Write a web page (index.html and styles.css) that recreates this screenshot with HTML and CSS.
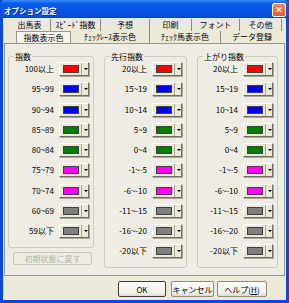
FILE: index.html
```html
<!DOCTYPE html>
<html lang="ja">
<head>
    <meta charset="UTF-8">
    <title>オプション設定</title>
    <link rel="stylesheet" href="styles.css">
</head>
<body>
    <div class="window">
        <div class="titlebar">
            <span class="title">オプション設定</span>
            <span class="close">✕</span>
        </div>
        <div class="frame">
            <div class="client">
                <div class="tab-row row1">
                    <div class="tab w1">出馬表</div>
                    <div class="tab w2">ｽﾋﾟｰﾄﾞ指数</div>
                    <div class="tab w3">予想</div>
                    <div class="tab w4">印刷</div>
                    <div class="tab w5">フォント</div>
                    <div class="tab w6">その他</div>
                </div>
                <div class="tab-row row2">
                    <div class="tab selected w7">指数表示色</div>
                    <div class="tab w8">ﾁｪｯｸﾚｰｽ表示色</div>
                    <div class="tab w9">ﾁｪｯｸ馬表示色</div>
                    <div class="tab w10">データ登録</div>
                </div>
                <div class="panel">
                    <div class="col">
                        <fieldset class="group g1">
                            <legend>指数</legend>
                            <div class="rows" id="shisu"></div>
                        </fieldset>
                        <button class="reset" disabled>初期状態に戻す</button>
                    </div>
                    <fieldset class="group g2">
                        <legend>先行指数</legend>
                        <div class="rows" id="senko"></div>
                    </fieldset>
                    <fieldset class="group g3">
                        <legend>上がり指数</legend>
                        <div class="rows" id="agari"></div>
                    </fieldset>
                </div>
                <div class="footer">
                    <button class="btn default ok">OK</button>
                    <button class="btn cancel">キャンセル</button>
                    <button class="btn help">ヘルプ(<u>H</u>)</button>
                </div>
            </div>
        </div>
    </div>

    <script>
        const shisu = [
            ["100以上", "red"], ["95~99", "blue"], ["90~94", "blue"],
            ["85~89", "green"], ["80~84", "green"], ["75~79", "magenta"],
            ["70~74", "magenta"], ["60~69", "gray"], ["59以下", "gray"]
        ];
        const sub = [
            ["20以上", "red"], ["15~19", "blue"], ["10~14", "blue"],
            ["5~9", "green"], ["0~4", "green"], ["-1~-5", "magenta"],
            ["-6~-10", "magenta"], ["-11~-15", "gray"], ["-16~-20", "gray"], ["-20以下", "gray"]
        ];

        function fillRows(id, data) {
            let html = "";
            data.forEach(([label, color]) => {
                html += `<span class="label">${label}</span>`;
                html += `<span class="picker"><span class="swatch ${color}"></span><span class="arrow"></span></span>`;
            });
            document.getElementById(id).innerHTML = html;
        }

        fillRows("shisu", shisu);
        fillRows("senko", sub);
        fillRows("agari", sub);
    </script>
</body>
</html>
```

FILE: styles.css
```css
body {
    margin: 0;
    font-family: "Noto Sans CJK JP", "Noto Sans", sans-serif;
    font-size: 8px;
    color: #000;
}
.window {
    width: 289px;
    height: 303px;
    display: flex;
    flex-direction: column;
    background: #0a48d8;
}
.titlebar {
    height: 18px;
    display: flex;
    align-items: center;
    background: linear-gradient(#3d8bf7, #0a5ceb 20%, #0553e3 60%, #0a4fd6 90%, #0840c0);
    border-radius: 5px 5px 0 0;
}
.title {
    color: #fff;
    font-weight: bold;
    font-size: 7.5px;
    margin-left: 4px;
    padding-top: 3px;
    text-shadow: 1px 1px 0 #0a2d8a;
}
.close {
    margin-left: auto;
    margin-right: 3px;
    width: 12px;
    height: 12px;
    border: 1px solid #fff;
    border-radius: 2px;
    background: linear-gradient(#f08e6c, #d95a33);
    color: #fff;
    font-family: "DejaVu Sans", sans-serif;
    font-size: 9px;
    font-weight: bold;
    line-height: 12px;
    text-align: center;
    margin-top: 2px;
}
.frame {
    flex: 1;
    padding: 0 3px 3px;
    display: flex;
}
.client {
    flex: 1;
    background: #ece9d8;
    padding: 1px 1px 0 1px;
    display: flex;
    flex-direction: column;
}
.tab-row {
    display: flex;
    height: 12px;
}
.row1 {
    padding-left: 5px;
}
.row2 {
    padding-left: 12px;
}
.tab {
    box-sizing: border-box;
    height: 12px;
    line-height: 12px;
    text-align: center;
    border-right: 1px solid #8c8a80;
    white-space: nowrap;
}
.tab.selected {
    background: #f6f5ef;
    border: 1px solid #9a988c;
    border-bottom: none;
    line-height: 11px;
}
.w1 { width: 42px; }
.w2 { width: 50px; }
.w3 { width: 49px; }
.w4 { width: 42px; }
.w5 { width: 48px; }
.w6 { width: 42px; }
.w7 { width: 55px; }
.w8 { width: 79px; }
.w9 { width: 71px; }
.w10 { width: 62px; border-right: none; }
.panel {
    box-sizing: border-box;
    height: 233px;
    width: 281px;
    border: 1px solid #9a988c;
    background: #efede3;
    padding: 8px 0 0 3px;
    display: flex;
    align-items: flex-start;
    gap: 10px;
}
.col {
    display: flex;
    flex-direction: column;
}
.group {
    margin: 0;
    border: 1px solid #cfcdbd;
    border-radius: 3px;
    padding: 1px 4px 9px 4px;
}
.g1 {
    width: 86px;
    box-sizing: border-box;
}
.g2 {
    width: 83px;
    box-sizing: border-box;
}
.g3 {
    width: 81px;
    box-sizing: border-box;
}
legend {
    padding: 0 1px;
    margin-left: 1px;
    line-height: 9px;
}
.rows {
    display: grid;
    grid-template-columns: 1fr 30px;
    column-gap: 5px;
    row-gap: 6.25px;
    align-items: center;
}
.label {
    text-align: right;
    line-height: 14px;
    white-space: nowrap;
}
.picker {
    box-sizing: border-box;
    height: 14px;
    display: flex;
    align-items: center;
    background: #ece9d8;
    border: 1px solid;
    border-color: #fff #716f64 #716f64 #fff;
    box-shadow: 1px 1px 0 #aca899;
}
.swatch {
    width: 16px;
    height: 8px;
    margin-left: 3px;
    border: 1px solid #404040;
    box-sizing: border-box;
}
.arrow {
    margin-left: 2px;
    height: 12px;
    flex: 1;
    border-left: 1px solid #aca899;
    position: relative;
}
.arrow::after {
    content: "";
    position: absolute;
    left: 2px;
    top: 5px;
    border-left: 2px solid transparent;
    border-right: 2px solid transparent;
    border-top: 2px solid #000;
}
.red { background: #ff0000; }
.blue { background: #0000ff; }
.green { background: #008000; }
.magenta { background: #ff00ff; }
.gray { background: #808080; }
.reset {
    margin: 4px 0 0 5px;
    width: 79px;
    height: 13px;
    padding: 0;
    font: inherit;
    color: #b3b0a2;
    background: #efede3;
    border: 1px solid #c9c7ba;
    border-radius: 2px;
}
.footer {
    display: flex;
    justify-content: flex-end;
    padding: 5px 18px 0 0;
}
.btn {
    height: 16px;
    padding: 0;
    font: inherit;
    background: linear-gradient(#fdfdfb, #f0efe8 80%, #dcdad0);
    border: 1px solid #8e8c80;
    border-radius: 2px;
}
.btn.default {
    border-color: #3c3c3c;
}
.ok { width: 48px; }
.cancel { width: 43px; margin-left: 5px; }
.help { width: 50px; margin-left: 3px; }
```
